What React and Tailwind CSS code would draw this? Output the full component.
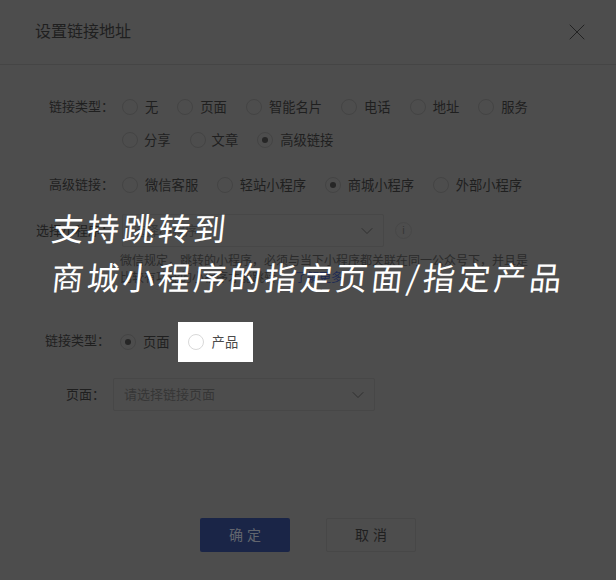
import { ChevronDown, X } from 'lucide-react';

const cjk = 'font-["Liberation_Sans","Noto_Sans_CJK_SC",sans-serif]';

function Radio({ label, checked = false, gap = 'gap-[7px]', bright = false }) {
  return (
    <div className={`flex items-center ${gap}`}>
      <span
        className={`flex h-4 w-4 shrink-0 items-center justify-center rounded-full border ${
          bright ? 'border-[#d9d9d9] bg-white' : 'border-[#444444]'
        }`}
      >
        {checked && <span className="h-[6px] w-[6px] rounded-full bg-[#262626]" />}
      </span>
      <span className={`whitespace-nowrap pt-[1px] text-[13.3px] ${bright ? 'text-[#4a4a4a]' : 'text-[#1f1f1f]'}`}>{label}</span>
    </div>
  );
}

function FakeSelect({ text, width }) {
  return (
    <div className={`flex h-[33px] items-center justify-between rounded-[2px] border border-[#474747] pl-[10px] pr-[6px] ${width}`}>
      <span className="text-[13px] text-[#363636]">{text}</span>
      <ChevronDown size={20} strokeWidth={0.9} className="text-[#262626]" />
    </div>
  );
}

export default function App() {
  return (
    <div className={`relative flex h-[580px] w-[616px] flex-col overflow-hidden bg-[#4d4d4d] ${cjk}`}>
      {/* Header */}
      <div className="flex h-[65px] shrink-0 items-center justify-between border-b border-[#454545] pl-[35px] pr-[25px]">
        <h2 className="text-[16px] font-normal text-[#1f1f1f]">设置链接地址</h2>
        <X size={28} strokeWidth={0.8} className="text-[#1f1f1f]" />
      </div>

      {/* 链接类型 */}
      <div className="mt-[32px] flex pl-[49px]">
        <div className="w-[73px] shrink-0 text-[13px] leading-5 text-[#1f1f1f]">链接类型：</div>
        <div className="flex flex-col gap-[13px]">
          <div className="flex h-5 gap-[19px]">
            <Radio label="无" />
            <Radio label="页面" />
            <Radio label="智能名片" />
            <Radio label="电话" />
            <Radio label="地址" />
            <Radio label="服务" />
          </div>
          <div className="flex h-5 gap-[19px]">
            <Radio label="分享" gap="gap-[6px]" />
            <Radio label="文章" gap="gap-[6px]" />
            <Radio label="高级链接" checked />
          </div>
        </div>
      </div>

      {/* 高级链接 */}
      <div className="mt-[25px] flex h-5 pl-[49px]">
        <div className="w-[73px] shrink-0 text-[13px] leading-5 text-[#1f1f1f]">高级链接：</div>
        <div className="flex gap-[18.5px]">
          <Radio label="微信客服" />
          <Radio label="轻站小程序" />
          <Radio label="商城小程序" checked />
          <Radio label="外部小程序" />
        </div>
      </div>

      {/* 选择小程序 */}
      <div className="mt-[19px] flex items-center pl-[36px]">
        <div className="w-[86px] shrink-0 text-[13px] text-[#1f1f1f]">选择小程序：</div>
        <FakeSelect text="选择小程序" width="w-[262px]" />
        <span className="ml-[11px] flex h-[17px] w-[17px] items-center justify-center rounded-full border border-[#474747] text-[11px] leading-none text-[#363636]">
          i
        </span>
      </div>
      <div className="ml-[120px] mt-[6px] w-[420px] text-[12px] leading-[17px] text-[#2b2b2b]">
        <p className="whitespace-nowrap">微信规定，跳转的小程序，必须与当下小程序都关联在同一公众号下，并且是</p>
        <p className="whitespace-nowrap">
          比较有功能的小程序才能跳转，<span className="ml-[7px] text-[#1c2a55]">了解更多</span>
        </p>
      </div>

      {/* 链接类型：页面 / 产品 */}
      <div className="mt-[35px] flex h-[40px] items-center pl-[45px]">
        <div className="w-[75px] shrink-0 pb-[3px] text-[13px] text-[#1f1f1f]">链接类型：</div>
        <Radio label="页面" checked />
        <div className="ml-[8px] flex h-[40px] w-[75px] items-center bg-white pl-[10px]">
          <Radio label="产品" bright gap="gap-[8px]" />
        </div>
      </div>

      {/* 页面 */}
      <div className="mt-[16px] flex items-center pl-[66px]">
        <div className="w-[47px] shrink-0 text-[13px] text-[#1f1f1f]">页面：</div>
        <FakeSelect text="请选择链接页面" width="w-[262px]" />
      </div>

      {/* Footer buttons */}
      <div className="mt-[107px] flex gap-[36px] pl-[200px]">
        <button className="h-[34px] w-[90px] rounded-[2px] bg-[#1a2547] pl-[4px] text-[14px] tracking-[4px] text-[#62656e]">确定</button>
        <button className="h-[34px] w-[90px] rounded-[2px] border border-[#474747] pl-[4px] text-[14px] tracking-[4px] text-[#1f1f1f]">取消</button>
      </div>

      {/* Hand-written caption over the dialog */}
      <div className="absolute left-[52px] top-[203px] font-['Noto_Sans_CJK_SC',sans-serif] text-[32px] font-normal leading-[49px] text-white">
        <p className="-skew-x-6 whitespace-nowrap tracking-[3.5px]">支持跳转到</p>
        <p className="-skew-x-6 whitespace-nowrap tracking-[3.5px]">商城小程序的指定页面/指定产品</p>
      </div>
    </div>
  );
}
